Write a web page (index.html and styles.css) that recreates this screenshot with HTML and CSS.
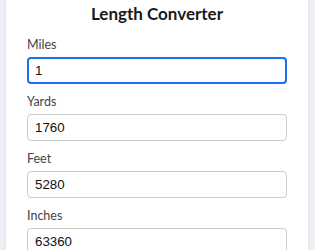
FILE: index.html
```html
<html>
  <head>
    <title>Length Converter</title>
    <link rel="stylesheet" href="styles.css">
  </head>
  <body>
    <div id="card">
      <h1>Length Converter</h1>
      <div class="field">
        <label for="miles">Miles</label>
        <input id="miles" class="active" type="text" value="1">
      </div>
      <div class="field">
        <label for="yards">Yards</label>
        <input id="yards" type="text" value="1760">
      </div>
      <div class="field">
        <label for="feet">Feet</label>
        <input id="feet" type="text" value="5280">
      </div>
      <div class="field">
        <label for="inches">Inches</label>
        <input id="inches" type="text" value="63360">
      </div>
    </div>
  </body>
</html>
```

FILE: styles.css
```css
body {
  margin: 0;
  padding: 0;
  background-color: #eeeff4;
  font-family: Lato, "Noto Sans", sans-serif;
  overflow: hidden;
}
#card {
  display: flex;
  flex-direction: column;
  width: 302px;
  margin: 0 0 0 6px;
  padding: 2px 21px 20px 21px;
  box-sizing: border-box;
  background-color: #ffffff;
  box-shadow: 0 0 3px rgba(0, 0, 0, 0.08);
  min-height: 260px;
}
h1 {
  margin: 0 0 11px 0;
  font-size: 17px;
  line-height: 24px;
  font-weight: bold;
  text-align: center;
  color: #1a1a1a;
}
.field {
  display: flex;
  flex-direction: column;
  margin-bottom: 10px;
}
label {
  font-size: 12.5px;
  line-height: 16px;
  color: #444444;
  margin-bottom: 4px;
}
input {
  height: 27px;
  width: 100%;
  box-sizing: border-box;
  padding: 0 7px;
  border: 1px solid #cccccc;
  border-radius: 4px;
  font-family: "Liberation Sans", Arial, sans-serif;
  font-size: 13.3px;
  color: #111111;
  outline: none;
}
input.active {
  border: 2px solid #1a6ff0;
  padding: 0 6px;
}
```
